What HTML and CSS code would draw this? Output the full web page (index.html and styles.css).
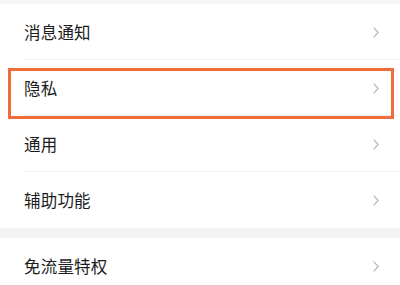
FILE: index.html
```html
<!DOCTYPE html>
<html lang="zh">
<head>
<meta charset="utf-8">
<link rel="stylesheet" href="styles.css">
</head>
<body>
<div class="screen">
  <div class="topband"></div>
  <div class="group">
    <div class="row"><span class="label">消息通知</span><svg class="chev" viewBox="0 0 6 11"><path d="M0.7 0.7 L5.2 5.5 L0.7 10.3" /></svg></div>
    <div class="row"><span class="label">隐私</span><svg class="chev" viewBox="0 0 6 11"><path d="M0.7 0.7 L5.2 5.5 L0.7 10.3" /></svg></div>
    <div class="row"><span class="label">通用</span><svg class="chev" viewBox="0 0 6 11"><path d="M0.7 0.7 L5.2 5.5 L0.7 10.3" /></svg></div>
    <div class="row last"><span class="label">辅助功能</span><svg class="chev" viewBox="0 0 6 11"><path d="M0.7 0.7 L5.2 5.5 L0.7 10.3" /></svg></div>
  </div>
  <div class="gap"></div>
  <div class="group">
    <div class="row last"><span class="label">免流量特权</span><svg class="chev" viewBox="0 0 6 11"><path d="M0.7 0.7 L5.2 5.5 L0.7 10.3" /></svg></div>
  </div>
  <div class="highlight"></div>
</div>
</body>
</html>
```
FILE: styles.css
```css
html, body {
  margin: 0;
  padding: 0;
  background: #ffffff;
}
.screen {
  position: relative;
  width: 400px;
  height: 285px;
  overflow: hidden;
  font-family: "Noto Sans CJK SC", "Noto Sans", sans-serif;
  background: #ffffff;
}
.topband {
  height: 4px;
  background: #f5f5f7;
}
.group {
  background: #ffffff;
}
.row {
  height: 56px;
  display: flex;
  align-items: center;
  justify-content: space-between;
  padding: 0 21px 0 24px;
  position: relative;
}
.row::after {
  content: "";
  position: absolute;
  left: 24px;
  right: 0;
  bottom: 0;
  height: 1px;
  background: #f3f3f5;
}
.row.last::after {
  display: none;
}
.label {
  font-size: 16.5px;
  color: #1c1c1c;
  letter-spacing: 0.2px;
}
.chev {
  width: 6px;
  height: 11px;
  fill: none;
  stroke: #b4b4b4;
  stroke-width: 1.2;
}
.gap {
  height: 10px;
  background: #f3f3f6;
}
.highlight {
  position: absolute;
  left: 8px;
  top: 68px;
  width: 380px;
  height: 45px;
  border: 3px solid #f06c3a;
}
```
